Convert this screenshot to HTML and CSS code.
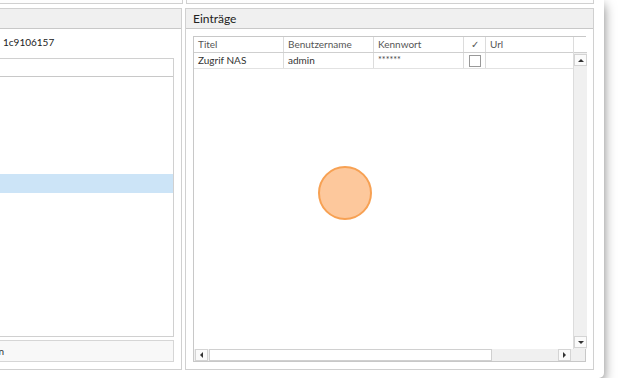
FILE: index.html
```html
<!DOCTYPE html>
<html lang="de">
<head>
    <meta charset="UTF-8">
    <title>Einträge</title>
    <link rel="stylesheet" href="styles.css">
</head>
<body>
    <div class="window">
        <div class="top-strip">
            <div class="box left"></div>
            <div class="box right"></div>
        </div>
        <div class="main">
            <div class="group left-group">
                <div class="group-head"></div>
                <div class="group-body">
                    <div class="guid">1c9106157</div>
                    <div class="listbox">
                        <div class="list-head"></div>
                        <div class="list-rows">
                            <div class="list-row"></div>
                            <div class="list-row"></div>
                            <div class="list-row"></div>
                            <div class="list-row"></div>
                            <div class="list-row"></div>
                            <div class="list-row selected"></div>
                        </div>
                    </div>
                    <div class="textbox"><span class="tb-text">Suchen</span></div>
                </div>
            </div>
            <div class="group right-group">
                <div class="group-head">Einträge</div>
                <div class="group-body">
                    <div class="grid">
                        <div class="grid-main">
                            <div class="grid-table">
                                <div class="row head">
                                    <div class="cell c1">Titel</div>
                                    <div class="cell c2">Benutzername</div>
                                    <div class="cell c3">Kennwort</div>
                                    <div class="cell c4">✓</div>
                                    <div class="cell c5">Url</div>
                                </div>
                                <div class="row">
                                    <div class="cell c1">Zugrif NAS</div>
                                    <div class="cell c2">admin</div>
                                    <div class="cell c3 stars">******</div>
                                    <div class="cell c4"><span class="check"></span></div>
                                    <div class="cell c5"></div>
                                </div>
                            </div>
                            <div class="vscroll">
                                <div class="vhead"></div>
                                <div class="vtrack">
                                    <div class="arrow-btn"><span class="tri up"></span></div>
                                    <div class="arrow-btn"><span class="tri down"></span></div>
                                </div>
                            </div>
                        </div>
                        <div class="hscroll">
                            <div class="htrack">
                                <div class="arrow-btn"><span class="tri left"></span></div>
                                <div class="thumb"></div>
                                <div class="arrow-btn"><span class="tri right"></span></div>
                            </div>
                            <div class="corner"></div>
                        </div>
                    </div>
                </div>
            </div>
        </div>
        <div class="pointer"></div>
    </div>
</body>
</html>
```

FILE: styles.css
```css
body {
    margin: 0;
    background-color: #fff;
    overflow: hidden;
    font-family: "Lato", "Open Sans", sans-serif;
    font-size: 10px;
    color: #333;
}
.window {
    position: relative;
    margin-left: -20px;
    width: 624px;
    height: 378px;
    box-sizing: border-box;
    padding: 0 10px 8px 0;
    background-color: #fff;
    border-bottom-right-radius: 5px;
    box-shadow: rgba(0, 0, 0, 0.5) 0px 5px 12px 0px;
    display: flex;
    flex-direction: column;
    gap: 4px;
}
.top-strip {
    display: flex;
    gap: 3px;
    height: 4px;
}
.top-strip .box {
    border: 1px solid #d0d0d0;
    border-top: none;
    background-color: #fdfdfd;
}
.top-strip .left { width: 201px; }
.top-strip .right { width: 407px; }
.main {
    flex: 1;
    display: flex;
    gap: 3px;
}
.group {
    display: flex;
    flex-direction: column;
    border: 1px solid #d0d0d0;
    background-color: #fff;
}
.left-group { width: 201px; }
.right-group { width: 407px; }
.group-head {
    height: 19px;
    background-color: #f0f0f0;
    border-bottom: 1px solid #c8c8c8;
    padding-left: 7px;
    font-size: 12px;
    line-height: 19px;
    color: #222;
}
.group-body {
    flex: 1;
    display: flex;
    flex-direction: column;
    padding: 7px 7px 7px 7px;
}
.guid {
    height: 22px;
    line-height: 12px;
    padding-left: 15px;
    color: #222;
}
.listbox {
    flex: 1;
    border: 1px solid #d0d0d0;
    display: flex;
    flex-direction: column;
}
.list-head {
    height: 17px;
    border-bottom: 1px solid #c8c8c8;
}
.list-row {
    height: 19px;
}
.list-rows {
    padding-top: 2px;
}
.list-row.selected {
    background-color: #cce4f7;
}
.textbox {
    margin-top: 3px;
    height: 20px;
    border: 1px solid #d6d6d6;
    background-color: #f8f8f8;
    line-height: 20px;
    color: #333;
    overflow: hidden;
    white-space: nowrap;
}
.tb-text {
    display: inline-block;
    margin-left: -17px;
}
.grid {
    flex: 1;
    border: 1px solid #c8c8c8;
    display: flex;
    flex-direction: column;
}
.grid-main {
    flex: 1;
    display: flex;
}
.grid-table {
    flex: 1;
}
.row {
    display: flex;
    height: 15px;
    border-bottom: 1px solid #e2e2e2;
}
.row.head {
    color: #555;
    border-bottom-color: #cfcfcf;
}
.cell {
    box-sizing: border-box;
    border-right: 1px solid #dcdcdc;
    padding-left: 4px;
    line-height: 15px;
    white-space: nowrap;
    overflow: hidden;
}
.c1 { width: 90px; }
.c2 { width: 90px; }
.c3 { width: 90px; }
.c4 { width: 22px; display: flex; justify-content: center; align-items: center; padding-left: 0; }
.c5 { width: 87px; border-right: none; }
.stars {
    font-size: 9px;
    line-height: 13px;
    color: #444;
}
.check {
    width: 10px;
    height: 10px;
    border: 1px solid #999;
    background-color: #fff;
}
.vscroll {
    width: 13px;
    border-left: 1px solid #dcdcdc;
    display: flex;
    flex-direction: column;
}
.vhead {
    height: 15px;
    border-bottom: 1px solid #cfcfcf;
    background-color: #fff;
}
.vtrack {
    flex: 1;
    background-color: #f0f0f0;
    display: flex;
    flex-direction: column;
    justify-content: space-between;
    padding: 1px 0;
}
.arrow-btn {
    width: 11px;
    height: 10px;
    margin: 0 auto;
    border: 1px solid #d4d4d4;
    background-color: #fafafa;
    display: flex;
    justify-content: center;
    align-items: center;
}
.tri {
    width: 0;
    height: 0;
}
.tri.up {
    border-left: 3px solid transparent;
    border-right: 3px solid transparent;
    border-bottom: 3px solid #333;
}
.tri.down {
    border-left: 3px solid transparent;
    border-right: 3px solid transparent;
    border-top: 3px solid #333;
}
.tri.left {
    border-top: 3px solid transparent;
    border-bottom: 3px solid transparent;
    border-right: 3px solid #333;
}
.tri.right {
    border-top: 3px solid transparent;
    border-bottom: 3px solid transparent;
    border-left: 3px solid #333;
}
.hscroll {
    height: 12px;
    display: flex;
    background-color: #f0f0f0;
}
.htrack {
    flex: 1;
    display: flex;
    align-items: center;
    gap: 1px;
    padding-left: 1px;
}
.htrack .arrow-btn {
    margin: 0;
}
.thumb {
    width: 281px;
    height: 10px;
    border: 1px solid #d0d0d0;
    background-color: #fff;
    margin-right: auto;
}
.corner {
    width: 14px;
}
.pointer {
    position: absolute;
    left: 338px;
    top: 166px;
    width: 50px;
    height: 50px;
    border-radius: 50%;
    background-color: #fdc89c;
    border: 2px solid #f7a153;
}
```
